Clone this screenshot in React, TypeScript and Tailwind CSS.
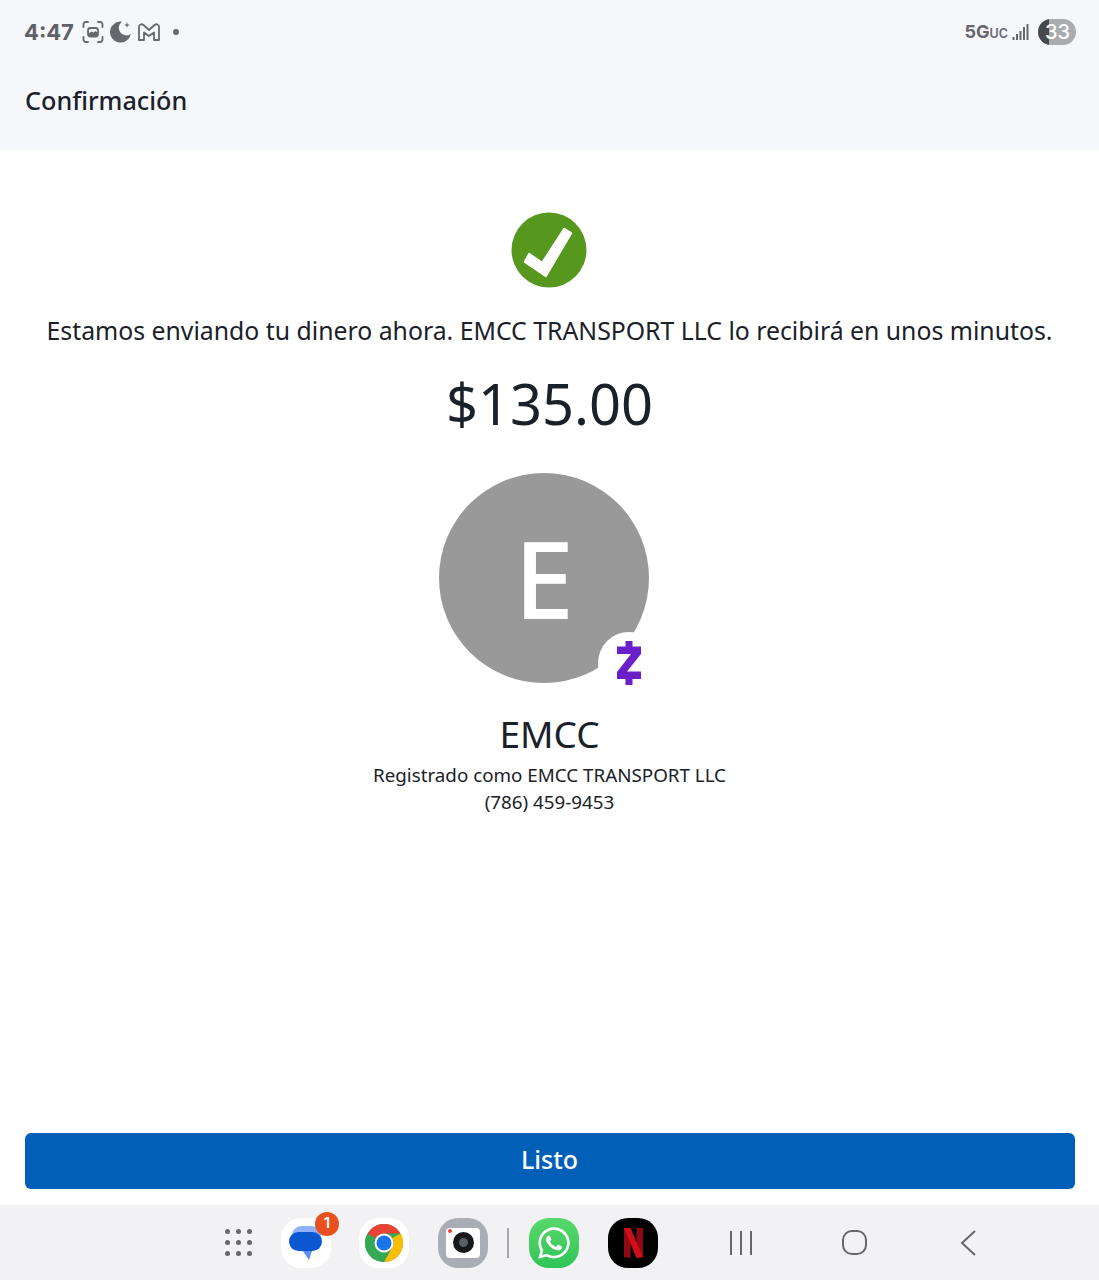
import { FaWhatsapp } from "react-icons/fa";

const noto = "font-['Noto_Sans',sans-serif]";

const StatusLeft = () => (
  <div className="flex items-center">
    <span className="ml-[-1px] w-[50px] font-['Inter',sans-serif] text-[22px] font-bold leading-none text-[#5f6166]">4:47</span>
    {/* screenshot icon */}
    <svg width="24" height="24" viewBox="0 0 24 24" fill="none" className="ml-[7px]">
      <path d="M2.500 7V4.500A2.500 2.500 0 0 1 5 2H7M17 2h2A2.500 2.500 0 0 1 21.500 4.500V7M21.500 17v2.500A2.500 2.500 0 0 1 19 22H17M7 22H5A2.500 2.500 0 0 1 2.500 19.500V17" stroke="#66686d" strokeWidth="1.800" strokeLinecap="round" />
      <rect x="7" y="8" width="10" height="8.500" rx="2.500" stroke="#66686d" strokeWidth="1.800" />
      <path d="M7.500 13.500l3-2 2 1 2-1.500 2 1.500v3.500h-9z" fill="#66686d" />
    </svg>
    {/* moon */}
    <svg width="24" height="24" viewBox="0 0 24 24" className="ml-[4px]">
      <path d="M13 1.700a10.500 10.500 0 1 0 8.800 12.300 7.500 7.500 0 0 1-8.800-12.300z" fill="#66686d" />
      <path d="M18 2l.7 2.300L21 5l-2.300.7L18 8l-.7-2.300L15 5l2.300-.7z" fill="#66686d" />
    </svg>
    {/* gmail */}
    <svg width="26" height="24" viewBox="0 0 26 24" fill="none" className="ml-[3px]">
      <path d="M3 20V7C3 4.500 5.500 3.500 7.500 5L13 10l5.500-5C20.500 3.500 23 4.500 23 7v13h-5v-7.500L13 16l-5-3.500V20z" stroke="#66686d" strokeWidth="1.800" strokeLinejoin="round" />
    </svg>
    <span className="ml-[11px] h-[6px] w-[6px] rounded-full bg-[#66686d]" />
  </div>
);

const StatusRight = () => (
  <div className="flex items-center">
    <span className="font-['Inter',sans-serif] text-[18px] font-bold leading-none text-[#66686d]">
      5G<span className="text-[12.500px] font-semibold">UC</span>
    </span>
    <svg width="18" height="18" viewBox="0 0 18 18" className="ml-[4px]" fill="#66686d">
      <rect x="0.500" y="14" width="2" height="3" />
      <rect x="4" y="11" width="2" height="6" />
      <rect x="7.500" y="8" width="2" height="9" />
      <rect x="11" y="4" width="2" height="13" />
      <rect x="14.500" y="1" width="2" height="16" />
    </svg>
    <div className="relative ml-[8px] flex h-[26px] w-[38px] items-center justify-end overflow-hidden rounded-full bg-[#a9abaf] pr-[6px]">
      <div className="absolute inset-y-0 left-0 w-[11px] bg-[#48494d]" />
      <span className="relative font-['Inter',sans-serif] text-[20px] font-medium leading-none text-white">33</span>
    </div>
  </div>
);

const ZelleMark = () => (
  <svg width="26" height="46" viewBox="0 0 26 46">
    <path
      d="M9.500 1h7v5.500H25V14L11 31.500h14V39h-8.500v6h-7v-6H1v-7L15 14H1V6.500h8.500z"
      fill="#6a1fc9"
    />
  </svg>
);

const DockIcon = ({ className, children }: { className: string; children: React.ReactNode }) => (
  <div className={`flex h-[50px] w-[50px] items-center justify-center rounded-[20px] ${className}`}>{children}</div>
);

const Dock = () => (
  <footer className="flex h-[75px] items-center bg-[#f2f2f5] pl-[225px]">
    {/* app grid */}
    <div className="grid w-[27px] grid-cols-3 gap-[6px]">
      {Array.from({ length: 9 }).map((_, i) => (
        <span key={i} className="h-[5px] w-[5px] rounded-full bg-[#66676b]" />
      ))}
    </div>

    {/* messages */}
    <div className="relative ml-[29px]">
      <DockIcon className="bg-white">
        <svg width="36" height="36" viewBox="0 0 36 36">
          <rect x="4" y="1" width="29" height="19" rx="9.500" fill="#8fb2f8" />
          <path d="M14 24h14l-4 2-3 9-7-10z" fill="#5f8ff0" />
          <rect x="1" y="7" width="33" height="19" rx="9.500" fill="#0b57d0" />
        </svg>
      </DockIcon>
      <span className="absolute right-[-8px] top-[-6px] flex h-[24px] w-[24px] items-center justify-center rounded-full bg-[#e8501f] font-['Inter',sans-serif] text-[15px] font-semibold text-white">
        1
      </span>
    </div>

    {/* chrome */}
    <div className="ml-[28px]">
      <DockIcon className="bg-white">
        <svg width="38" height="38" viewBox="0 0 38 38">
          <circle cx="19" cy="19" r="19" fill="#34a853" />
          <path d="M19 0a19 19 0 0 1 16.500 9.500H19a9.500 9.500 0 0 0-8.200 4.700L2.600 9.500A19 19 0 0 1 19 0z" fill="#ea4335" />
          <path d="M35.500 9.500A19 19 0 0 1 19 38l8.200-14.200A9.500 9.500 0 0 0 27.200 14z" fill="#fbbc04" />
          <path d="M2.600 9.500l8.200 14.300A9.500 9.500 0 0 0 19 28.500L19 38A19 19 0 0 1 2.600 9.500z" fill="#34a853" />
          <circle cx="19" cy="19" r="9.500" fill="#fff" />
          <circle cx="19" cy="19" r="7.500" fill="#1a73e8" />
        </svg>
      </DockIcon>
    </div>

    {/* camera */}
    <div className="ml-[29px]">
      <DockIcon className="bg-[#a9aeb6]">
        <div className="relative flex h-[30px] w-[34px] items-center justify-center rounded-[4px] bg-white">
          <span className="absolute left-[2px] top-[1px] h-[4px] w-[4px] rounded-full bg-[#e0413a]" />
          <span className="flex h-[21px] w-[21px] items-center justify-center rounded-full bg-[#16181b]">
            <span className="h-[9px] w-[9px] rounded-full bg-[#5a5f66]" />
          </span>
        </div>
      </DockIcon>
    </div>

    <span className="ml-[19px] h-[30px] w-[2px] bg-[#a7a8ab]" />

    {/* whatsapp */}
    <div className="ml-[20px]">
      <DockIcon className="bg-gradient-to-b from-[#58d86a] to-[#2fc457]">
        <FaWhatsapp className="h-[36px] w-[36px] text-white" />
      </DockIcon>
    </div>

    {/* netflix */}
    <div className="ml-[29px]">
      <DockIcon className="bg-black">
        <svg width="19" height="30" viewBox="0 0 19 30">
          <path d="M0 0h6.500v30L0 29z" fill="#8f0a12" />
          <path d="M12.500 0H19v29l-6.500 1z" fill="#8f0a12" />
          <path d="M0 0h6.500L19 29l-6.500 1z" fill="#d00f1a" />
        </svg>
      </DockIcon>
    </div>

    {/* nav buttons */}
    <svg width="24" height="26" viewBox="0 0 24 26" className="ml-[71px]" fill="none" stroke="#66676b" strokeWidth="2">
      <path d="M2 1v24M12 1v24M22 1v24" />
    </svg>
    <div className="ml-[89px] h-[25px] w-[25px] rounded-[10px] border-2 border-[#66676b]" />
    <svg width="18" height="28" viewBox="0 0 18 28" className="ml-[92px]" fill="none" stroke="#66676b" strokeWidth="2">
      <path d="M16 2L3 14l13 12" />
    </svg>
  </footer>
);

export default function App() {
  return (
    <div className={`flex h-[1280px] w-[1099px] flex-col overflow-hidden bg-white ${noto}`}>
      <header className="h-[150px] bg-[#f5f7fb] pl-[25px] pr-[23px]">
        <div className="flex h-[64px] items-center justify-between">
          <StatusLeft />
          <StatusRight />
        </div>
        <h1 className="mt-[18px] text-[25.200px] font-medium leading-[36px] text-[#1a2129]">Confirmación</h1>
      </header>

      <main className="flex flex-1 flex-col items-center">
        <svg width="76" height="76" viewBox="0 0 76 76" className="ml-[-1px] mt-[62px]">
          <circle cx="38" cy="38" r="37.500" fill="#56981d" />
          <path d="M13 50l5-9 13 9L53 16l8 5-26 44z" fill="#fff" stroke="#fff" strokeWidth="1" strokeLinejoin="round" />
        </svg>
        <p className="mt-[23px] whitespace-nowrap text-[24.800px] leading-[38px] text-[#1a2129]">
          Estamos enviando tu dinero ahora. EMCC TRANSPORT LLC lo recibirá en unos minutos.
        </p>
        <p className="mt-[19px] text-[56px] leading-[70px] text-[#1a2129]">$135.00</p>

        <div className="relative ml-[-11px] mt-[35px] flex h-[210px] w-[210px] items-center justify-center rounded-full bg-[#999999]">
          <span className="text-[108px] font-medium leading-none text-white">E</span>
          <div className="absolute left-[159px] top-[159px] flex h-[62px] w-[62px] items-center justify-center rounded-full bg-white">
            <ZelleMark />
          </div>
        </div>

        <p className="mt-[27px] text-[37px] leading-[48px] text-[#1a2129]">EMCC</p>
        <p className="mt-[4px] text-[18.800px] leading-[27px] text-[#1a2129]">Registrado como EMCC TRANSPORT LLC</p>
        <p className="text-[18.800px] leading-[27px] text-[#1a2129]">(786) 459-9453</p>

        <div className="flex-1" />
        <button className="mb-[16px] h-[56px] w-[1050px] rounded-[6px] bg-[#0060b8] pb-[2px] text-[25px] font-medium text-white">
          Listo
        </button>
      </main>

      <Dock />
    </div>
  );
}
